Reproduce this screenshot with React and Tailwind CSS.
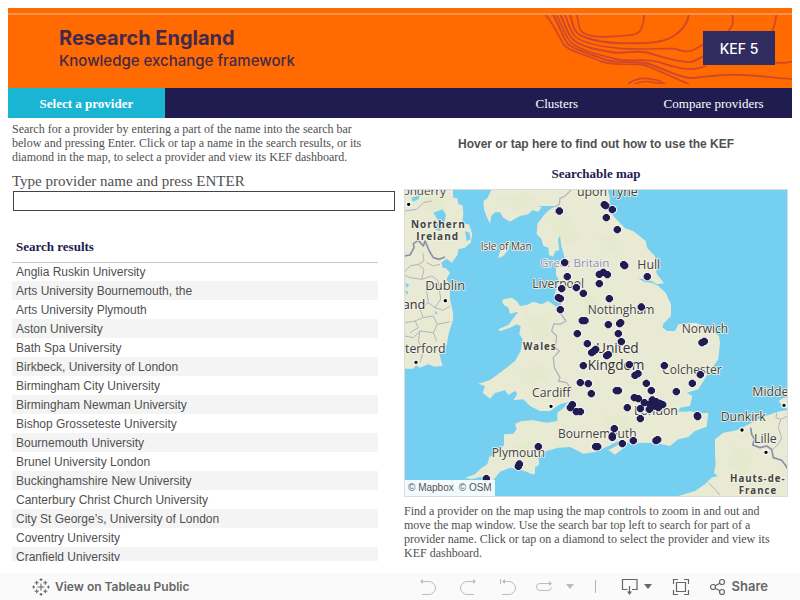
import React from "react";

const SERIF = "font-['Liberation_Serif',serif]";
const SANS = "font-['Liberation_Sans',sans-serif]";

const providers = [
  "Anglia Ruskin University",
  "Arts University Bournemouth, the",
  "Arts University Plymouth",
  "Aston University",
  "Bath Spa University",
  "Birkbeck, University of London",
  "Birmingham City University",
  "Birmingham Newman University",
  "Bishop Grosseteste University",
  "Bournemouth University",
  "Brunel University London",
  "Buckinghamshire New University",
  "Canterbury Christ Church University",
  "City St George’s, University of London",
  "Coventry University",
  "Cranfield University",
];

const markers = [
  [478, 80], [494, 235], [502, 277], [485, 313], [529, 310], [550, 327], [475, 340], [481, 343],
  [481, 376], [547, 409], [555, 409], [532, 448], [562, 478], [613, 61], [617, 64], [637, 76],
  [619, 100], [652, 136], [671, 241], [674, 244], [598, 270], [610, 264], [622, 271], [598, 298],
  [742, 277], [628, 343], [724, 368], [625, 421], [659, 418], [662, 415], [655, 448], [664, 472],
  [906, 475], [913, 471], [575, 505], [582, 500], [587, 495], [550, 544], [541, 595], [565, 598],
  [574, 628], [517, 661], [511, 670], [529, 682], [541, 682], [415, 787], [358, 839], [355, 846],
  [259, 883], [587, 787], [593, 787], [620, 514], [625, 511], [688, 541], [705, 573], [714, 568],
  [739, 597], [754, 619], [649, 619], [655, 619], [793, 544], [901, 571], [877, 597], [829, 622],
  [703, 640], [715, 643], [733, 655], [682, 670], [721, 673], [721, 703], [757, 647], [768, 652],
  [750, 660], [763, 665], [775, 670], [788, 661], [748, 675], [780, 657], [892, 694], [893, 697],
  [643, 733], [637, 755], [637, 759], [667, 778], [700, 769], [768, 769], [773, 766],
];

const towns = [[26, 60], [136, 349], [48, 534], [453, 666], [1026, 737], [1098, 804], [1152, 663]];

const labels = [
  { t: "onderry", x: 8, y: 33, s: 35 },
  { t: "upon Tyne", x: 531, y: 36, s: 37 },
  { t: "Northern", x: 33, y: 131, s: 30, b: 1, w: 3 },
  { t: "Ireland", x: 49, y: 167, s: 30, b: 1, w: 3 },
  { t: "Isle of Man", x: 242, y: 197, s: 30 },
  { t: "Great Britain", x: 420, y: 249, s: 35, c: "#8d8fb8" },
  { t: "Hull", x: 712, y: 254, s: 37 },
  { t: "Dublin", x: 76, y: 318, s: 39 },
  { t: "Liverpool", x: 397, y: 311, s: 36 },
  { t: "and", x: 8, y: 375, s: 38, m: 1 },
  { t: "Nottingham", x: 563, y: 390, s: 36 },
  { t: "Norwich", x: 845, y: 445, s: 36 },
  { t: "terford", x: 15, y: 506, s: 37 },
  { t: "Wales", x: 369, y: 496, s: 29, b: 1, w: 3 },
  { t: "United", x: 588, y: 505, s: 41, m: 1 },
  { t: "Kingdom", x: 563, y: 558, s: 41, m: 1 },
  { t: "Colchester", x: 787, y: 568, s: 36 },
  { t: "Cardiff", x: 396, y: 637, s: 37 },
  { t: "London", x: 702, y: 693, s: 37 },
  { t: "Middelburg", x: 1057, y: 634, s: 37 },
  { t: "Dunkirk", x: 962, y: 710, s: 37 },
  { t: "Bournemouth", x: 474, y: 762, s: 36 },
  { t: "Lille", x: 1062, y: 775, s: 37 },
  { t: "Plymouth", x: 275, y: 819, s: 36 },
  { t: "Hauts-de-", x: 990, y: 894, s: 29, b: 1, w: 3 },
  { t: "France", x: 1016, y: 930, s: 29, b: 1, w: 3 },
];

function ProviderMap() {
  return (
    <svg viewBox="15 17 1146 917" className="block h-auto w-full" role="img" aria-label="Map of providers">
      <rect x="0" y="0" width="1200" height="960" fill="#75cff0" />
      <g fill="#e9ead4">
        <path d="M0 0H158L160 40 172 42 175 60 187 62 190 85 187 118 207 120 217 150 212 175 195 190 175 195 172 213 155 235 140 223 124 235 128 250 138 252 150 265 140 283 150 312 150 345 158 380 160 400 155 420 148 440 143 465 141 480 135 490 118 508 125 536 128 545 103 547 85 540 60 550 48 543 40 553H0Z" />
        <path d="M268 0 275 15 262 42 250 50 252 75 258 93 270 118 274 95 285 84 300 84 310 100 330 112 345 103 360 95 385 90 397 78 415 82 425 68 412 65H468L450 75 435 88 425 102 412 118 410 150 425 165 430 185 445 190 447 212 460 217 466 200 478 198 474 165 480 155 484 185 490 205 495 225 478 240 468 252 468 272 478 290 470 310 463 332 478 350 485 360 470 368 445 350 425 360 400 352 380 362 360 365 350 350 335 340 310 345 306 353 312 362 325 370 330 388 355 382 325 422 295 435 300 441 330 430 350 420 362 425 358 450 368 465 362 500 345 530 300 565 270 587 235 598 255 605 248 625 270 643 285 626 315 618 325 632 345 620 352 628 340 648 370 645 390 665 420 680 450 680 480 660 508 652 535 615 510 645 490 672 472 685 472 710 440 715 400 708 365 710 345 718 350 735 340 748 312 750 312 782 290 805 268 818 262 840 245 850 225 870 195 880 215 885 240 878 275 894 300 862 330 850 355 855 380 862 395 870 405 868 405 850 418 840 415 820 440 800 475 790 510 788 530 798 550 808 585 803 610 792 630 783 655 770 695 778 735 775 770 777 810 785 835 765 865 758 885 740 920 727 925 685 895 688 870 680 835 682 840 670 870 665 877 635 860 625 895 615 910 590 930 560 955 525 960 475 957 455 930 430 885 415 835 420 825 440 802 440 788 430 790 418 813 395 813 360 797 325 775 305 755 295 735 293 715 283 738 285 755 290 770 300 792 297 770 268 765 215 742 192 737 170 700 140 675 132 645 100 625 75 630 45 620 0Z" />
        <path d="M295 222 298 205 318 172 330 170 326 195 310 215Z" />
        <path d="M625 797 645 811 672 790 658 780Z" />
        <path d="M1200 670 1162 677 1130 683 1085 700 1040 723 1010 738 970 745 945 765 945 805 947 840 942 865 953 875 935 880 915 900 885 920 835 935V960H1200Z" />
        <path d="M1136 650 1150 640H1200V675L1160 672 1145 662Z" />
      </g>
      <g fill="#dfe8c4" opacity=".35">
        <path d="M60 60 90 30 140 40 130 70 80 90ZM290 40 380 25 420 55 350 85ZM440 110 500 90 540 160 500 180ZM590 160 640 150 680 190 620 200ZM375 385 440 400 450 460 400 470ZM350 560 420 540 450 590 370 600ZM540 340 590 330 600 380 560 390ZM600 690 680 700 700 740 620 740ZM340 780 390 770 400 810 350 810ZM1000 780 1060 820 1040 870 980 850Z" />
      </g>
      <g fill="#75cff0">
        <path d="M100 85 128 75 138 92 132 118 120 140 103 135 115 110ZM195 140 208 145 212 165 200 170ZM35 40 60 32 55 45 38 52ZM40 15 55 15 52 28ZM15 295 28 302 20 310ZM15 318 25 322 20 332ZM105 380 113 385 107 392ZM845 675 860 668 872 680 852 682Z" />
      </g>
      <g fill="none" stroke="#b3b4c0" strokeWidth="3" strokeLinejoin="round">
        <path stroke="#8d8ea8" strokeWidth="5" d="M12 215 30 212 42 190 40 178 55 168 70 185 75 170 88 200 100 220 118 225 135 218" />
        <path d="M68 205 72 230 55 240 30 245 15 262M80 235 100 245 120 240M55 240 72 255 65 285 30 280 12 272M65 285 95 275 115 290 122 345 105 370 85 355 60 375 70 400 45 410 15 415M105 370 130 378 150 365M85 355 80 320 92 300M70 400 100 395 112 420 100 445 60 440 40 460 15 455M112 420 150 412M60 440 55 470 70 500 60 535M45 410 55 430 30 445M15 80 50 75 70 55 95 50M100 445 110 470" />
        <path strokeWidth="4" d="M515 15 495 35 480 42 478 60 465 68M478 350 480 385 498 410 480 420 462 418 455 440 470 455 466 490 478 500 460 520 463 550 480 580 475 590 500 595 515 615" />
        <path stroke="#8d8ea8" strokeWidth="5" d="M1052 730 1055 750 1064 765 1058 782 1080 790 1100 785 1115 795 1120 820 1145 828 1158 845 1164 855" />
        <path d="M1130 685 1128 700 1142 705 1135 730 1145 760 1135 780 1118 795M1142 705 1164 695M925 895 945 915 960 932" />
      </g>
      <g fontFamily="'Open Sans', sans-serif" stroke="#f2f2e6" strokeWidth="5" strokeLinejoin="round" paintOrder="stroke">
        {labels.map((l) => (
          <text
            key={l.t}
            x={l.x}
            y={l.y}
            fontSize={l.s}
            fontWeight={l.b ? 700 : l.m ? 500 : 400}
            letterSpacing={l.w || 0}
            fill={l.c || (l.m ? "#303030" : "#424242")}
          >
            {l.t}
          </text>
        ))}
      </g>
      {towns.map(([x, y]) => (
        <circle key={x} cx={x} cy={y} r="7" fill="#000" stroke="#f4f4ee" strokeWidth="4" />
      ))}
      <g fill="#f1f1f6">
        {markers.map(([x, y], i) => (
          <circle key={i} cx={x} cy={y} r="14" />
        ))}
      </g>
      <g fill="#211c50">
        {markers.map(([x, y], i) => (
          <path key={i} d={`M${x - 4} ${y - 11}h8l7 7v8l-7 7h-8l-7 -7v-8z`} />
        ))}
      </g>
    </svg>
  );
}

function Contours() {
  return (
    <svg viewBox="430 42 746 207" className="h-[69px] w-[249px]" fill="none" stroke="#d0472a" strokeWidth="5" aria-hidden="true">
      <path d="M438 42C465 75 478 110 493 133C515 155 560 160 605 182C650 195 690 187 728 191C775 205 815 230 868 249" />
      <path d="M460 42C480 75 488 110 505 130C530 152 580 160 622 178C660 188 710 178 745 188C800 205 835 230 872 231C905 230 940 221 1000 221C1070 221 1120 231 1176 234" strokeWidth="6" />
      <path d="M470 42C488 75 495 105 514 125C545 150 595 160 640 172C690 185 730 170 780 184C820 197 855 208 890 203L920 195" />
      <path d="M482 42C497 70 500 100 522 118C550 140 600 147 645 155C690 155 720 146 760 160C810 175 850 186 875 182C890 178 900 170 912 166" strokeWidth="6" />
      <path d="M495 42C508 68 508 92 530 110C560 130 610 138 660 142C720 147 780 141 825 143C850 150 860 155 880 148L912 130" />
      <path d="M510 42C522 65 515 85 540 102C580 122 640 128 700 127C770 127 810 120 838 92C857 74 866 60 866 42" strokeWidth="6" />
      <path d="M530 42C540 65 532 85 552 97C580 112 620 108 645 106C680 102 715 107 725 82C733 65 732 55 733 42" />
      <path d="M998 42C1000 65 1003 75 980 95M1129 42C1128 65 1124 75 1115 97M1126 184Q1150 188 1176 182" />
      <path d="M685 249C715 225 745 232 760 236C768 232 780 242 797 249M705 249C730 235 760 242 785 249" />
    </svg>
  );
}

function Header() {
  return (
    <header className="flex h-20 flex-col bg-[#ff6b00] pt-[5px]">
      <div className="h-0.5 bg-[#f79350]" />
      <div className="flex h-[69px] pl-[51px]">
        <div className="grow whitespace-nowrap pt-[11px] font-['Inter',sans-serif] text-[#43294c]">
          <h1 className="text-[20px] leading-6 font-bold">Research England</h1>
          <p className="text-[15px] leading-[22px] font-medium">Knowledge exchange framework</p>
        </div>
        <div className="relative flex shrink-0">
          <Contours />
          <span className="absolute top-4 right-[17px] flex h-[34px] w-[72px] items-center justify-center bg-[#302c60] font-['Inter',sans-serif] text-[14px] font-medium text-white">
            KEF 5
          </span>
        </div>
      </div>
    </header>
  );
}

function Nav() {
  return (
    <nav className={`flex h-[30px] items-stretch justify-between bg-[#211c50] text-[13px] text-white ${SERIF}`}>
      <a href="#select" className="flex w-1/5 items-center justify-center bg-[#19b5d3] pt-0.5 font-bold">
        Select a provider
      </a>
      <div className="flex w-2/5 pt-0.5">
        <a href="#clusters" className="flex w-1/2 items-center justify-center">Clusters</a>
        <a href="#compare" className="flex w-1/2 items-center justify-center">Compare providers</a>
      </div>
    </nav>
  );
}

function IconButton({ label, className, children }) {
  return (
    <button type="button" aria-label={label} className={className}>
      {children}
    </button>
  );
}

const lineIcon = { fill: "none", stroke: "currentColor", strokeWidth: 1, className: "block h-5 w-5", viewBox: "0 0 20 20" };

function Toolbar() {
  return (
    <footer className="flex h-[27px] shrink-0 items-center justify-between bg-[#fafafa] px-8 font-['Inter',sans-serif] font-semibold text-[#666]">
      <a href="#tableau" className="flex items-center gap-[5px]">
        <svg viewBox="0 0 18 18" className="h-[18px] w-[18px]" fill="none" stroke="currentColor" strokeWidth="1.1" aria-hidden="true">
          <path d="M9 5.500v7M5.500 9h7M4.700 2.700v4M2.700 4.700h4M13.300 2.700v4M11.300 4.700h4M4.700 11.300v4M2.700 13.300h4M13.300 11.300v4M11.300 13.300h4M9 .2v2.800M7.600 1.600h2.800M9 15v2.800M7.600 16.400h2.800M1.600 7.600v2.800M.2 9h2.800M16.400 7.600v2.800M15 9h2.800" />
        </svg>
        <span className="text-[12px]">View on Tableau Public</span>
      </a>
      <div className="flex items-center">
        <div className="flex items-center gap-5 text-[#bcbcbc]">
          <IconButton label="Undo">
            <svg {...lineIcon}><path d="M3 4.500h8a6 6 0 0 1 0 13H4" /><path d="M2 4.500 5 2v5z" fill="currentColor" stroke="none" /></svg>
          </IconButton>
          <IconButton label="Redo">
            <svg {...lineIcon}><path d="M17 4.500H9A6 6 0 0 0 9 17.500h7" /><path d="M18 4.500 15 2v5z" fill="currentColor" stroke="none" /></svg>
          </IconButton>
          <IconButton label="Revert">
            <svg {...lineIcon}><path d="M2.500 2v5M5 4.500h6a6 6 0 0 1 0 13H4" /><path d="M4 4.500 7 2v5z" fill="currentColor" stroke="none" /></svg>
          </IconButton>
        </div>
        <IconButton label="Refresh" className="ml-4 text-[#bcbcbc]">
          <svg {...lineIcon}><path d="M17 6.500H6a3.500 3.500 0 0 0 0 7h8a3.500 3.500 0 0 0 3.500-3" /><path d="M18 6.500 15 4v5z" fill="currentColor" stroke="none" /></svg>
        </IconButton>
        <IconButton label="Refresh options" className="ml-3 text-[#bcbcbc]">
          <svg viewBox="0 0 8 5" className="h-[5px] w-2" fill="currentColor"><path d="M0 0h8L4 5z" /></svg>
        </IconButton>
        <div className="ml-[21px] h-[13px] w-px bg-[#b4b4b4]" />
        <IconButton label="Download" className="ml-6 flex items-center gap-1">
          <svg {...lineIcon} strokeWidth={1.2}><path d="M7.500 12.500H2.500v-10h14.500v10h-5M9.500 9v7" /><path d="M7 14.500h5L9.500 18z" fill="currentColor" stroke="none" /></svg>
          <svg viewBox="0 0 8 5" className="h-[5px] w-2" fill="currentColor"><path d="M0 0h8L4 5z" /></svg>
        </IconButton>
        <IconButton label="Full screen" className="ml-[19px]">
          <svg {...lineIcon} strokeWidth={1.2}><path d="M2.500 7V2.500H7M13 2.500h4.500V7M17.500 13v4.500H13M7 17.500H2.500V13M5.500 5.500h9v9h-9z" /></svg>
        </IconButton>
        <button type="button" className="ml-[17px] flex items-center gap-1">
          <svg {...lineIcon} strokeWidth={1.2}><circle cx="5" cy="10" r="2.500" /><circle cx="14" cy="5" r="2.500" /><circle cx="14" cy="15" r="2.500" /><path d="m7.200 8.800 4.600-2.500M7.200 11.200l4.600 2.500" /></svg>
          <span className="text-[13px]">Share</span>
        </button>
      </div>
    </footer>
  );
}

export default function App() {
  return (
    <div className="flex h-screen flex-col overflow-hidden bg-white text-[#505050]">
      <div className="shrink-0 px-2 pt-2">
        <Header />
        <Nav />
      </div>
      <main className="flex min-h-0 grow gap-2 px-3 pb-3">
        <section className="flex min-h-0 flex-1 flex-col">
          <p className={`pt-1 pr-[18px] text-[12px] leading-[14px] ${SERIF}`}>
            Search for a provider by entering a part of the name into the search bar below and pressing Enter. Click or tap a name in the search results, or its diamond in the map, to select a provider and view its KEF dashboard.
          </p>
          <label htmlFor="provider" className={`mt-2 text-[15px] leading-[19px] ${SERIF}`}>
            Type provider name and press ENTER
          </label>
          <div className="shrink-0 px-px">
            <input id="provider" type="text" className={`block h-5 w-full border border-[#444] px-1 text-[13px] outline-none ${SANS}`} />
          </div>
          <div className="mt-[19px] min-h-0 grow overflow-hidden pr-[18px]">
            <table className={`w-full border-collapse text-[12px] ${SANS}`}>
              <thead>
                <tr className="h-8 border-b border-[#c8c8c8]">
                  <th scope="col" className={`px-1 pt-[3px] text-left text-[13px] leading-4 font-bold text-[#211c50] ${SERIF}`}>
                    Search results
                  </th>
                </tr>
              </thead>
              <tbody>
                {providers.map((name) => (
                  <tr key={name} className="h-[19px] even:bg-[#f4f4f4]">
                    <td className="px-1 py-0 leading-[18px]">{name}</td>
                  </tr>
                ))}
              </tbody>
            </table>
          </div>
        </section>
        <section className="flex min-h-0 flex-1 flex-col">
          <p className={`pt-[18px] text-center text-[12px] leading-4 font-bold ${SANS}`}>
            Hover or tap here to find out how to use the KEF
          </p>
          <h2 className={`mt-[14px] text-center text-[13px] leading-4 font-bold text-[#211c50] ${SERIF}`}>Searchable map</h2>
          <div className="relative mt-[7px] shrink-0 overflow-hidden border border-[#dcdcdc]">
            <ProviderMap />
            <div className={`absolute bottom-0 left-0 flex gap-[5px] bg-white/90 px-[3px] text-[10px] leading-4 text-[#555] ${SANS}`}>
              <a href="#mapbox">© Mapbox</a>
              <a href="#osm">© OSM</a>
            </div>
          </div>
          <p className={`mt-[7px] text-[12px] leading-[14px] ${SERIF}`}>
            Find a provider on the map using the map controls to zoom in and out and move the map window. Use the search bar top left to search for part of a provider name. Click or tap on a diamond to select the provider and view its KEF dashboard.
          </p>
        </section>
      </main>
      <Toolbar />
    </div>
  );
}
